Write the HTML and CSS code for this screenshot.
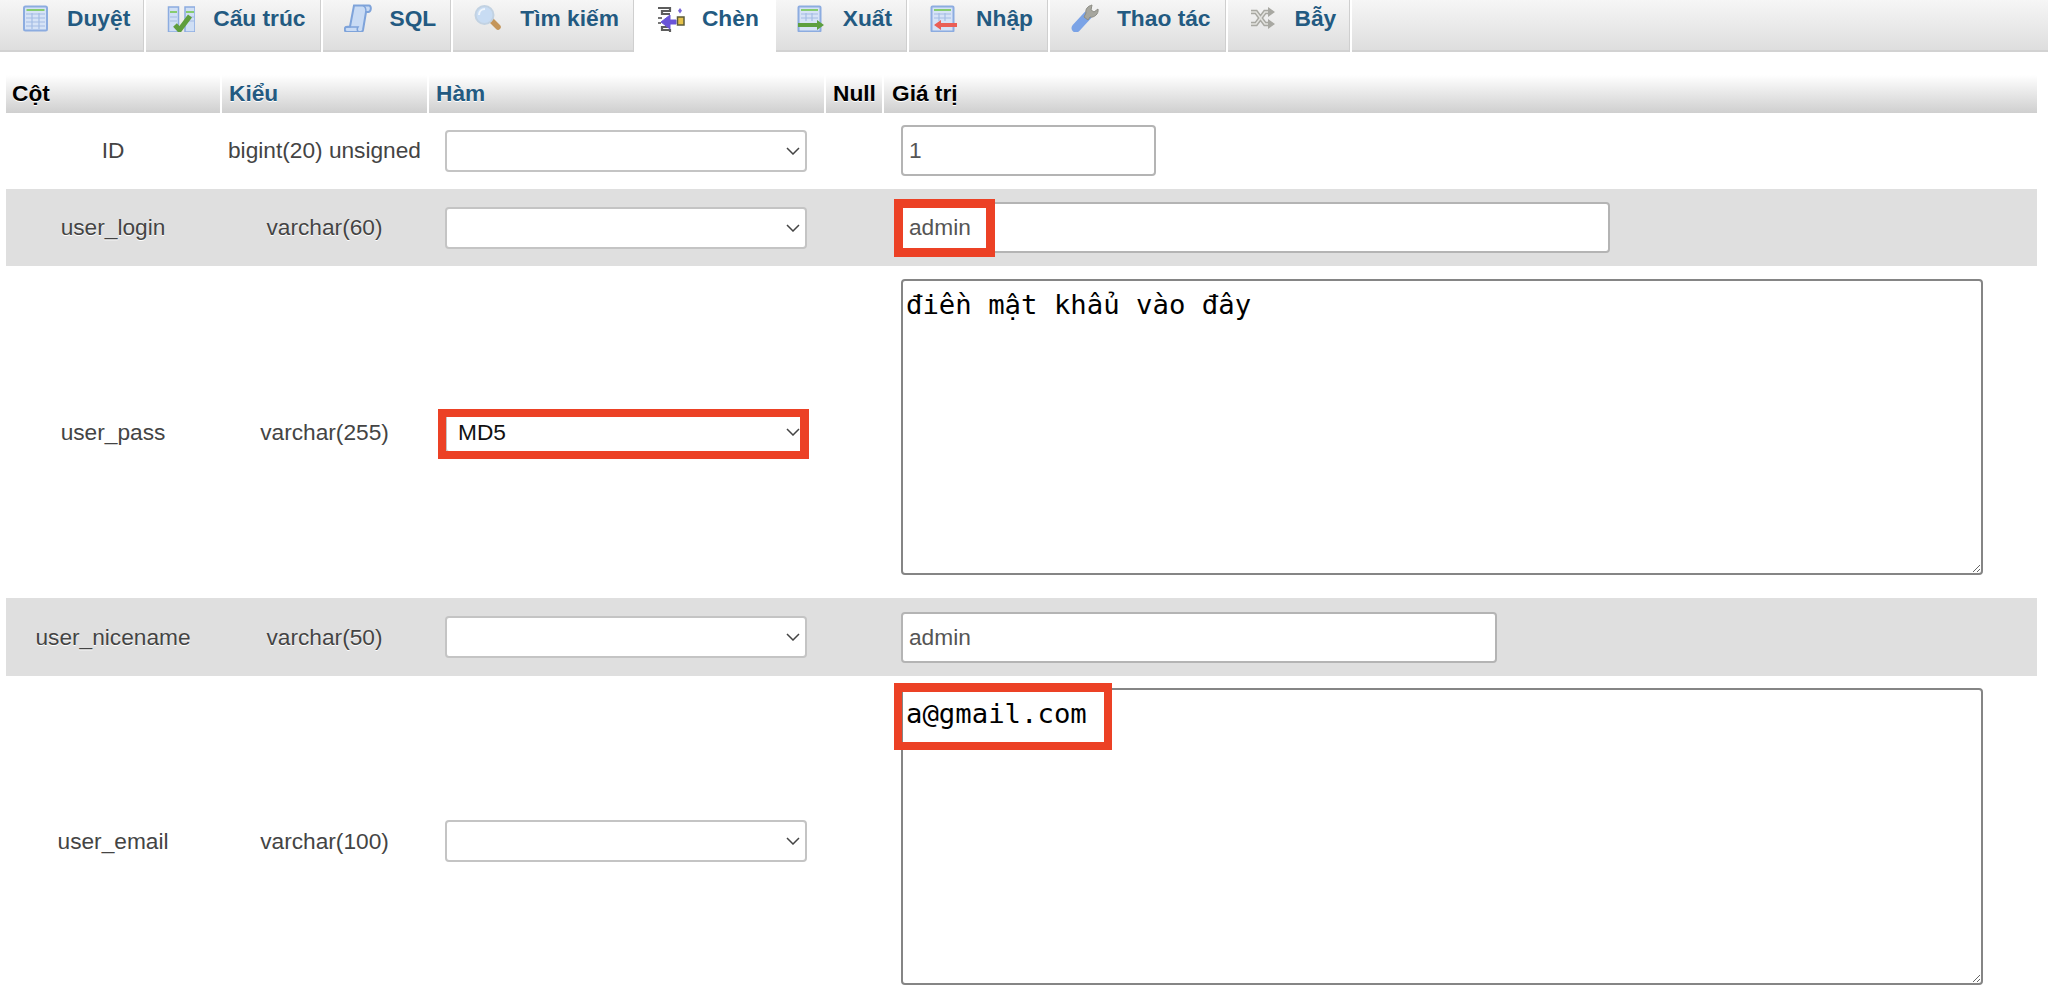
FILE: index.html
```html
<!DOCTYPE html>
<html lang="vi">
<head>
<meta charset="utf-8">
<title>phpMyAdmin - Chèn</title>
<link rel="stylesheet" href="styles.css">
</head>
<body>
<nav class="tabs">
  <a class="tab first">
    <svg class="ico" viewBox="0 0 28 28"><rect x="3" y="2.500" width="23" height="24" rx="1.500" fill="#d6e3f6" stroke="#8cace0" stroke-width="2"/><rect x="5.500" y="5" width="18" height="2" fill="#86cc70"/><path d="M5 10h19M5 14h19M5 18h19M5 22h19M11 9v16M18 9v16" stroke="#a3bce4" stroke-width="1.200"/></svg>
    <span>Duyệt</span>
  </a>
  <a class="tab">
    <svg class="ico" viewBox="0 0 28 28"><rect x="1.500" y="3" width="10" height="25" fill="#d0dff5" stroke="#8cace0" stroke-width="1.500"/><rect x="18" y="3" width="10" height="25" fill="#d0dff5" stroke="#8cace0" stroke-width="1.500"/><path d="M3 8h7M19 8h8" stroke="#86cc70" stroke-width="2"/><path d="M3 13h7M3 17h7M19 13h8M19 17h8" stroke="#a3bce4" stroke-width="1.200"/><path d="M8 21l4.500 5L23 12" fill="none" stroke="#5f9e3d" stroke-width="5"/></svg>
    <span>Cấu trúc</span>
  </a>
  <a class="tab">
    <svg class="ico" viewBox="0 0 28 28"><path d="M10 1.500h15c2.500 0 2.500 6-.5 6.500H22l-3 18c-.3 1.500-1 2-2.500 2H3c-2.500 0-3-4-1-5l4-.5z" fill="#c9dbf4" stroke="#7ea3da" stroke-width="2"/><path d="M19 1.500c3 1 3 5 3 6.500M2 23h12c-1 1.500-1 3.500.5 5" fill="none" stroke="#7ea3da" stroke-width="1.500"/></svg>
    <span>SQL</span>
  </a>
  <a class="tab">
    <svg class="ico" viewBox="0 0 28 28"><path d="M16 15l8 8" stroke="#c4955a" stroke-width="5.500" stroke-linecap="round"/><circle cx="10.500" cy="11" r="9" fill="#c8dcf3" stroke="#c2d2e2" stroke-width="2"/><path d="M5 11c0-4 3-6 6-6" fill="none" stroke="#eef5fc" stroke-width="2"/></svg>
    <span>Tìm kiếm</span>
  </a>
  <a class="tab active">
    <svg class="ico" viewBox="0 0 28 28"><path d="M1 4h12v3H5v3h8M1 29h12v-3H5v-3h8" fill="none" stroke="#5d5d5d" stroke-width="2.200"/><path d="M1 14h4M1 19h3" stroke="#777" stroke-width="2"/><path d="M19 16h-6v-5l-9 7 9 7v-5h6z" fill="#6a55d8" stroke="#6a55d8"/><rect x="20.500" y="13" width="6.500" height="8" fill="#e6c24a" stroke="#5b5b3a" stroke-width="1.500"/><path d="M23 4l2 2.800L23 9.500l-2-2.700z" fill="#7a66d8"/></svg>
    <span>Chèn</span>
  </a>
  <a class="tab">
    <svg class="ico" viewBox="0 0 28 28"><rect x="1.500" y="2.500" width="22" height="25" rx="1" fill="#d6e3f6" stroke="#8cace0" stroke-width="2"/><rect x="4" y="5" width="17" height="2" fill="#86cc70"/><path d="M4 10h17M4 14h17M9 9v8M15 9v8" stroke="#a3bce4" stroke-width="1.200"/><path d="M1 19h19v-3l7 5-7 5v-3H1z" fill="#5d9f3f"/></svg>
    <span>Xuất</span>
  </a>
  <a class="tab">
    <svg class="ico" viewBox="0 0 28 28"><rect x="1.500" y="2.500" width="22" height="25" rx="1" fill="#d6e3f6" stroke="#8cace0" stroke-width="2"/><rect x="4" y="5" width="17" height="2" fill="#86cc70"/><path d="M4 10h17M4 14h17M9 9v8M15 9v8" stroke="#a3bce4" stroke-width="1.200"/><path d="M27 19H11v-3l-7 5 7 5v-3h16z" fill="#ea5f56"/></svg>
    <span>Nhập</span>
  </a>
  <a class="tab">
    <svg class="ico" viewBox="0 0 28 28"><path d="M5 24L17 11" stroke="#7ba3e6" stroke-width="9" stroke-linecap="round"/><path d="M15 9c-1-4 2-7 6-8l-1 5 3 2 4-3c1 5-4 9-8 8l-2 3-4-3z" fill="#a6a69e" stroke="#8d8d85"/></svg>
    <span>Thao tác</span>
  </a>
  <a class="tab last-tab">
    <svg class="ico" viewBox="0 0 28 28"><path d="M2 8h5l9 12h4M2 20h5l9-12h4" fill="none" stroke="#a8a8a2" stroke-width="4.500"/><path d="M2 8h5l9 12h4M2 20h5l9-12h4" fill="none" stroke="#e2e2de" stroke-width="1.500"/><path d="M19 3l7 5-7 5zM19 15l7 5-7 5z" fill="#a8a8a2"/></svg>
    <span>Bẫy</span>
  </a>
</nav>

<main class="content">
  <table class="grid">
    <colgroup>
      <col class="c-col"><col class="c-type"><col class="c-fn"><col class="c-null"><col class="c-val">
    </colgroup>
    <thead>
      <tr>
        <th class="tight">Cột</th>
        <th class="link">Kiểu</th>
        <th class="link">Hàm</th>
        <th>Null</th>
        <th class="last">Giá trị</th>
      </tr>
    </thead>
    <tbody>
      <tr class="r-id">
        <td class="txt">ID</td>
        <td class="txt">bigint(20) unsigned</td>
        <td class="fn"><div class="sel"><select aria-label="Hàm"><option></option></select><svg class="chev" viewBox="0 0 14 8"><path d="M1 1l6 6 6-6"/></svg></div></td>
        <td></td>
        <td class="val"><input class="in w-id" value="1"></td>
      </tr>
      <tr class="r-login alt">
        <td class="txt">user_login</td>
        <td class="txt">varchar(60)</td>
        <td class="fn"><div class="sel"><select aria-label="Hàm"><option></option></select><svg class="chev" viewBox="0 0 14 8"><path d="M1 1l6 6 6-6"/></svg></div></td>
        <td></td>
        <td class="val"><div class="anchor w-login"><input class="in w-full" value="admin"><span class="mark m-login"></span></div></td>
      </tr>
      <tr class="r-pass">
        <td class="txt">user_pass</td>
        <td class="txt">varchar(255)</td>
        <td class="fn"><div class="sel"><select aria-label="Hàm"><option>MD5</option></select><svg class="chev" viewBox="0 0 14 8"><path d="M1 1l6 6 6-6"/></svg><span class="mark m-md5"></span></div></td>
        <td></td>
        <td class="val area-pass"><textarea class="ta ta-pass">điền mật khẩu vào đây</textarea></td>
      </tr>
      <tr class="r-nice alt">
        <td class="txt">user_nicename</td>
        <td class="txt">varchar(50)</td>
        <td class="fn"><div class="sel"><select aria-label="Hàm"><option></option></select><svg class="chev" viewBox="0 0 14 8"><path d="M1 1l6 6 6-6"/></svg></div></td>
        <td></td>
        <td class="val"><input class="in w-nice" value="admin"></td>
      </tr>
      <tr class="r-email">
        <td class="txt">user_email</td>
        <td class="txt">varchar(100)</td>
        <td class="fn"><div class="sel"><select aria-label="Hàm"><option></option></select><svg class="chev" viewBox="0 0 14 8"><path d="M1 1l6 6 6-6"/></svg></div></td>
        <td></td>
        <td class="val area-email"><div class="anchor"><textarea class="ta ta-email">a@gmail.com</textarea><span class="mark m-email"></span></div></td>
      </tr>
    </tbody>
  </table>
</main>
</body>
</html>
```

FILE: styles.css
```css
* { box-sizing: border-box; }

html, body {
  margin: 0;
  padding: 0;
  background: #fff;
}

body {
  height: 1008px;
  overflow: hidden;
  font-family: "Liberation Sans", Arial, sans-serif;
  font-size: 22.7px;
  color: #444;
}

/* top tab bar */
.tabs {
  display: flex;
  height: 52px;
  background: linear-gradient(#f6f6f6, #dedede);
  border-bottom: 2px solid #d2d2d2;
}

.tab {
  display: flex;
  align-items: flex-start;
  gap: 18px;
  height: 52px;
  padding: 4px 15px 0 21px;
  border-right: 2px solid #fff;
  box-shadow: inset -1px 0 0 #cfcfcf;
  color: #235a81;
  font-size: 22.75px;
  font-weight: bold;
  line-height: 28px;
  white-space: nowrap;
}

.tab.first { padding-right: 14px; }
.tab.last-tab { padding-right: 14px; }

.tab.active {
  background: #fff;
  border-right: 0;
  box-shadow: none;
  margin-bottom: -2px;
  padding-right: 17px;
  gap: 17px;
}

.ico {
  display: block;
  flex: none;
  width: 28px;
  height: 28px;
  filter: blur(0.4px);
}

/* insert form table */
.content {
  padding: 23px 0 0 6px;
}

.grid {
  width: 2031px;
  table-layout: fixed;
  border-collapse: separate;
  border-spacing: 0;
}

.c-col { width: 216px; }
.c-type { width: 207px; }
.c-fn { width: 397px; }
.c-null { width: 58px; }
.c-val { width: 1153px; }

th {
  height: 38px;
  padding: 0 0 2px 7px;
  background: linear-gradient(#ffffff, #cfcfcf);
  border-right: 2px solid #fff;
  color: #000;
  font-weight: bold;
  text-align: left;
  text-shadow: 0 1px 0 #fff;
  vertical-align: middle;
}

th.tight { padding-left: 6px; }
th.link { color: #235a81; }
th.last { border-right: 0; padding-left: 8px; }

td {
  padding: 0;
  vertical-align: middle;
}

.r-id { height: 76px; }
.r-id td { padding-bottom: 1px; }
.r-login { height: 77px; }
.r-pass { height: 332px; }
.r-nice { height: 78px; }
.r-email { height: 330px; }

.alt td { background: #dfdfdf; }

.txt {
  padding-right: 2px;
  text-align: center;
  text-shadow: 0 1px 0 #fff;
}

.fn { padding-left: 16px; }
.val { padding-left: 17px; }

.area-pass { padding: 13px 0 23px 17px; }
.area-email { padding: 12px 0 0 17px; vertical-align: top; }

/* controls */
.sel {
  position: relative;
  width: 362px;
  height: 42px;
}

select {
  display: block;
  width: 100%;
  height: 100%;
  padding: 0 40px 0 11px;
  appearance: none;
  -webkit-appearance: none;
  background: #fff;
  border: 2px solid #c4c4c4;
  border-radius: 4px;
  color: #111;
  font: 22.7px "Liberation Sans", Arial, sans-serif;
  outline: 0;
}

.chev {
  position: absolute;
  top: 17px;
  right: 7px;
  width: 14px;
  height: 8px;
  fill: none;
  stroke: #444;
  stroke-width: 1.5;
}

.in {
  display: block;
  height: 51px;
  padding: 0 6px;
  background: #fff;
  border: 2px solid #b4b4b4;
  border-radius: 4px;
  color: #555;
  font: 22.7px "Liberation Sans", Arial, sans-serif;
  outline: 0;
}

.w-id { width: 255px; }
.w-full { width: 100%; }
.w-nice { width: 596px; }

.anchor { position: relative; }
.w-login { width: 709px; }

.ta {
  display: block;
  width: 1082px;
  padding: 8px 3px 3px;
  background: #fff;
  border: 2px solid #858585;
  border-radius: 4px;
  color: #000;
  font: 27.3px/1.2 "DejaVu Sans Mono", monospace;
  outline: 0;
  resize: both;
}

.ta-pass { height: 296px; }
.ta-email { height: 297px; }

/* red annotation frames drawn over the screenshot */
.mark {
  position: absolute;
  display: block;
  border: 9px solid #ec4125;
  pointer-events: none;
}

.m-login {
  left: -7px;
  top: -3px;
  width: 101px;
  height: 58px;
}

.m-md5 {
  left: -7px;
  top: -2px;
  width: 371px;
  height: 50px;
  border-width: 8px 9px 8px 8px;
}

.m-email {
  left: -7px;
  top: -5px;
  width: 218px;
  height: 67px;
  border-width: 9px 8px 8px 8px;
}
```
